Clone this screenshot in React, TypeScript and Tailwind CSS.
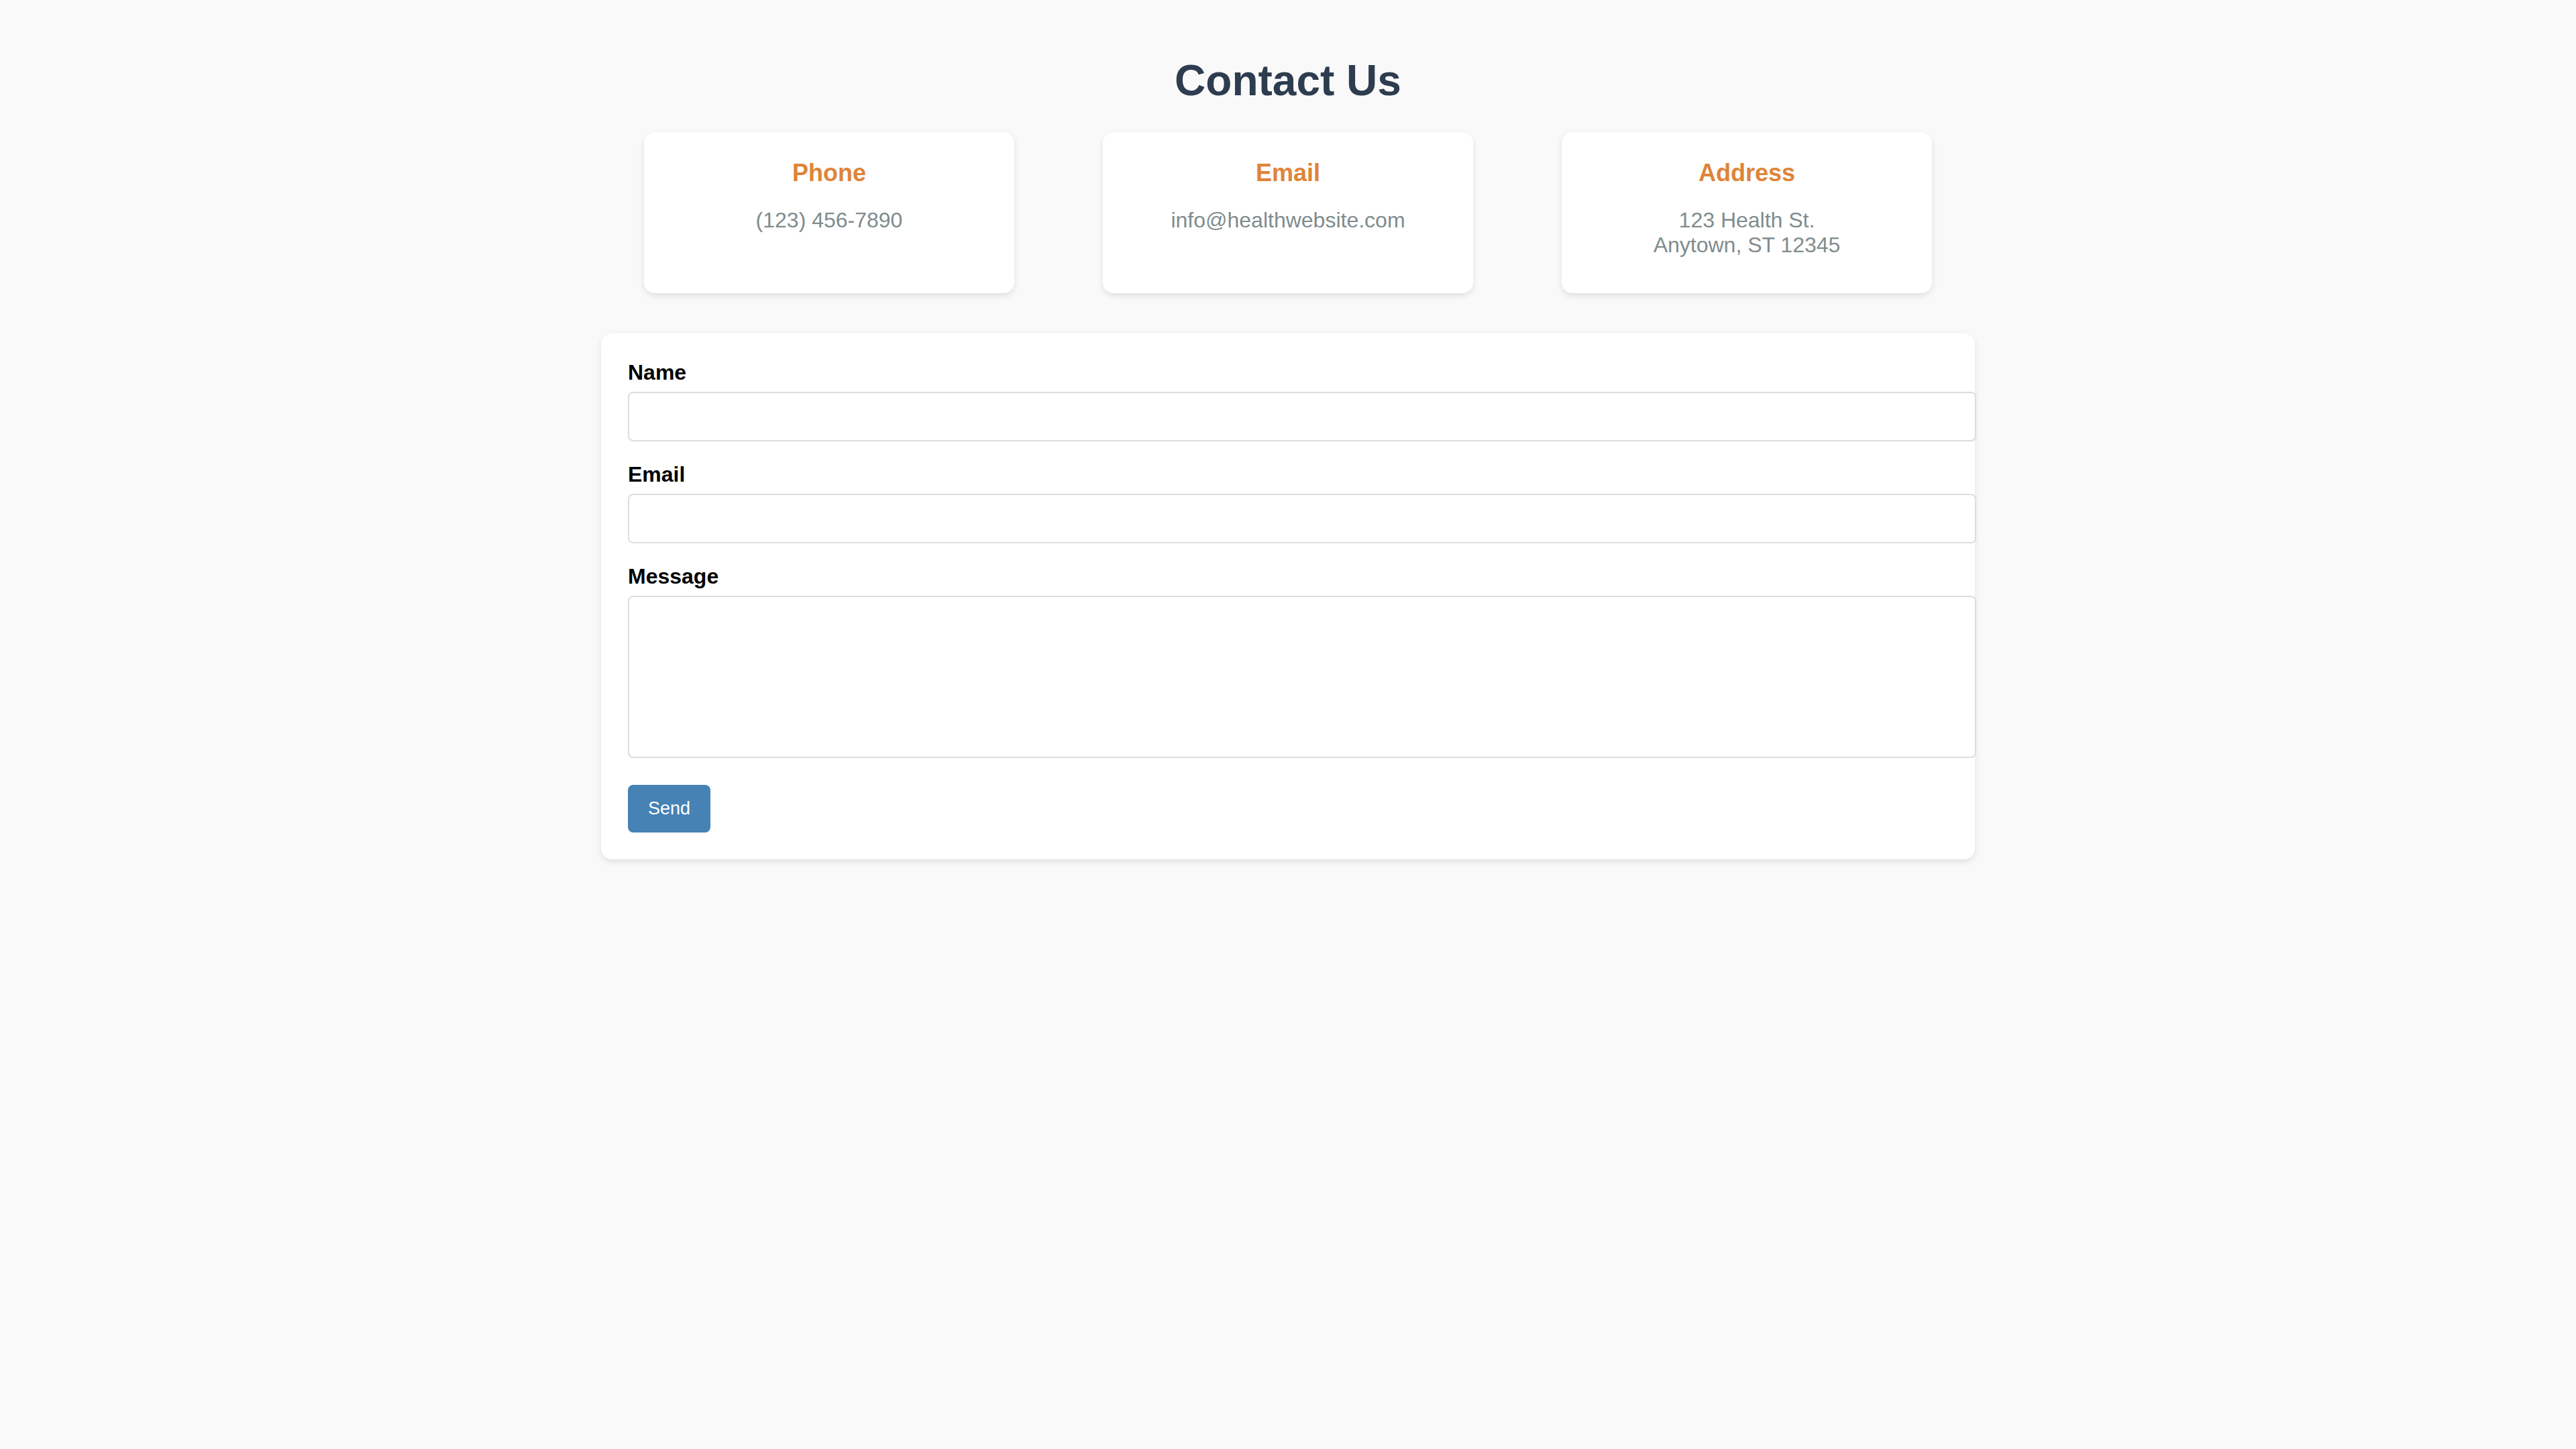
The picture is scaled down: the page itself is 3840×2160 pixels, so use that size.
import React from 'react';

const cards = [
  { title: 'Phone', lines: ['(123) 456-7890'] },
  { title: 'Email', lines: ['info@healthwebsite.com'] },
  { title: 'Address', lines: ['123 Health St.', 'Anytown, ST 12345'] },
];

const App: React.FC = () => {
  return (
    <div className="min-h-screen bg-[#f9f9f9] pt-[83px] font-['Liberation_Sans',Arial,sans-serif]">
      <h1 className="mb-[40px] text-center text-[64px] leading-[74px] font-bold text-[#2e3c4f]">Contact Us</h1>

      {/* Info cards */}
      <div className="mx-auto flex w-[1920px] justify-between">
        {cards.map(card => (
          <div key={card.title} className="h-[240px] w-[552px] rounded-[16px] bg-white pt-[40px] text-center shadow-[0_4px_10px_rgba(0,0,0,0.1)]">
            <h3 className="mb-[32px] text-[36px] leading-[41px] font-bold text-[#de8439]">{card.title}</h3>
            {card.lines.map(line => (
              <p key={line} className="text-[32px] leading-[37px] text-[#7f8c8d]">{line}</p>
            ))}
          </div>
        ))}
      </div>

      {/* Form */}
      <form className="mx-auto mt-[60px] w-[2048px] rounded-[16px] bg-white p-[40px] shadow-[0_4px_10px_rgba(0,0,0,0.1)]" onSubmit={e => e.preventDefault()}>
        <label htmlFor="name" className="mb-[10px] block text-[32px] leading-[37px] font-bold text-black">Name</label>
        <input id="name" type="text" className="mb-[31px] block h-[74px] w-[calc(100%+42px)] rounded-[8px] border-2 border-[#dddddd] bg-white px-[20px] text-[27px]" />

        <label htmlFor="email" className="mb-[10px] block text-[32px] leading-[37px] font-bold text-black">Email</label>
        <input id="email" type="email" className="mb-[31px] block h-[74px] w-[calc(100%+42px)] rounded-[8px] border-2 border-[#dddddd] bg-white px-[20px] text-[27px]" />

        <label htmlFor="message" className="mb-[10px] block text-[32px] leading-[37px] font-bold text-black">Message</label>
        <textarea id="message" className="block h-[242px] w-[calc(100%+42px)] resize-none rounded-[8px] border-2 border-[#dddddd] bg-white p-[20px] text-[27px]"></textarea>

        <button type="submit" className="mt-[40px] block h-[71px] rounded-[8px] bg-[#4682b4] px-[30px] text-[27px] leading-[31px] text-white">
          Send
        </button>
      </form>
    </div>
  );
};

export default App;
